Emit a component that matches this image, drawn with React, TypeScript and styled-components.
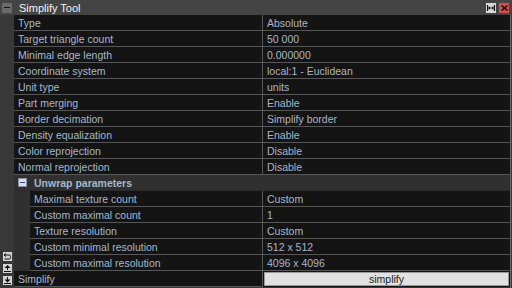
import React from "react";
import styled, { createGlobalStyle } from "styled-components";

const GlobalStyle = createGlobalStyle`
  html, body {
    margin: 0;
    padding: 0;
    background: #383838;
  }
  body {
    font-family: "Liberation Sans", Arial, sans-serif;
    font-size: 10.5px;
  }
`;

const Panel = styled.div`
  width: 512px;
  height: 288px;
  display: flex;
  flex-direction: column;
  background: #383838;
  overflow: hidden;
`;

const TitleBar = styled.div`
  height: 15px;
  display: flex;
  align-items: center;
  background: #444444;
  padding: 0 3px 0 2px;
  box-sizing: border-box;
`;

const CollapseBox = styled.div`
  width: 10px;
  height: 10px;
  background: #6a6a6a;
  display: flex;
  align-items: center;
  justify-content: center;
  margin-right: 7px;
  &::after {
    content: "";
    width: 6px;
    height: 1px;
    background: #111;
  }
`;

const Title = styled.div`
  color: #f2f2f2;
  font-size: 11px;
  flex: 1;
`;

const TitleButton = styled.div<{ $red?: boolean }>`
  width: 10px;
  height: 10px;
  margin-left: 3px;
  background: ${(p) => (p.$red ? "#dc4c4c" : "#d6d6d6")};
  display: flex;
  align-items: center;
  justify-content: center;
`;

const Body = styled.div`
  flex: 1;
  display: flex;
`;

const Gutter = styled.div`
  width: 14px;
  display: flex;
  flex-direction: column;
  justify-content: flex-end;
  align-items: center;
  gap: 3px;
  padding-bottom: 3px;
  box-sizing: border-box;
`;

const GutterIcon = styled.div`
  width: 9px;
  height: 9px;
  background: #d4d4d4;
  display: flex;
`;

const Table = styled.div`
  flex: 1;
  display: flex;
  flex-direction: column;
  border-right: 1px solid #6a6a6a;
  margin-right: 1px;
`;

const Row = styled.div<{ $indent?: boolean }>`
  height: 16px;
  display: flex;
  background: #303030;
  padding-left: ${(p) => (p.$indent ? "16px" : "0")};
`;

const Label = styled.div<{ $indent?: boolean }>`
  width: ${(p) => (p.$indent ? "228px" : "244px")};
  height: 14px;
  line-height: 14px;
  padding: 1px 0 0 4px;
  background: #141414;
  color: #a4b8ce;
  border-bottom: 1px solid #565656;
  white-space: nowrap;
`;

const Value = styled.div`
  flex: 1;
  height: 14px;
  line-height: 14px;
  padding: 1px 0 0 4px;
  background: #141414;
  color: #a9b6c6;
  border-left: 1px solid #565656;
  border-bottom: 1px solid #565656;
  white-space: nowrap;
`;

const GroupRow = styled.div`
  height: 16px;
  display: flex;
  align-items: center;
  background: #303030;
  border-bottom: 1px solid #2a2a2a;
  box-sizing: border-box;
  padding-left: 4px;
`;

const GroupBox = styled.div`
  width: 9px;
  height: 9px;
  background: #dcdce4;
  border: 1px solid #8a8a9a;
  box-sizing: border-box;
  display: flex;
  align-items: center;
  justify-content: center;
  margin-right: 7px;
  &::after {
    content: "";
    width: 5px;
    height: 1px;
    background: #2a4aa0;
  }
`;

const GroupTitle = styled.div`
  font-weight: bold;
  color: #a4b8ce;
  padding-top: 1px;
`;

const ButtonCell = styled.div`
  flex: 1;
  height: 16px;
  background: #141414;
  border-left: 1px solid #565656;
  padding: 1px;
  box-sizing: border-box;
  display: flex;
`;

const ActionButton = styled.button`
  flex: 1;
  margin: 0;
  padding: 1px 0 0;
  background: #e2e2e2;
  border: 1px solid #9a9a9a;
  color: #1a1a1a;
  font-family: "Liberation Sans", Arial, sans-serif;
  font-size: 10.5px;
  line-height: 11px;
`;

const mainRows: [string, string][] = [
  ["Type", "Absolute"],
  ["Target triangle count", "50 000"],
  ["Minimal edge length", "0.000000"],
  ["Coordinate system", "local:1 - Euclidean"],
  ["Unit type", "units"],
  ["Part merging", "Enable"],
  ["Border decimation", "Simplify border"],
  ["Density equalization", "Enable"],
  ["Color reprojection", "Disable"],
  ["Normal reprojection", "Disable"],
];

const unwrapRows: [string, string][] = [
  ["Maximal texture count", "Custom"],
  ["Custom maximal count", "1"],
  ["Texture resolution", "Custom"],
  ["Custom minimal resolution", "512 x 512"],
  ["Custom maximal resolution", "4096 x 4096"],
];

const UndoIcon = () => (
  <svg width="9" height="9" viewBox="0 0 9 9">
    <path d="M3 1.5 L1 3 L3 4.5 M1 3 H6.5 Q7.5 3 7.5 4.5 V5.5 Q7.5 7 6.5 7 H1.5" fill="none" stroke="#111" strokeWidth="1" />
  </svg>
);

const UpIcon = () => (
  <svg width="9" height="9" viewBox="0 0 9 9">
    <path d="M1.5 4 L4.5 1 L7.5 4 Z M4 4 H5 V6 H4 Z M1 7 H8 V8 H1 Z" fill="#111" />
  </svg>
);

const DownIcon = () => (
  <svg width="9" height="9" viewBox="0 0 9 9">
    <path d="M4 1 H5 V3.5 H7.5 L4.5 6.5 L1.5 3.5 H4 Z M1 7 H8 V8 H1 Z" fill="#111" />
  </svg>
);

const App = () => {
  return (
    <Panel>
      <GlobalStyle />
      <TitleBar>
        <CollapseBox />
        <Title>Simplify Tool</Title>
        <TitleButton>
          <svg width="8" height="6" viewBox="0 0 8 6">
            <path d="M0 0 H1 V6 H0 Z M7 0 H8 V6 H7 Z M1.5 1 L4 3 L1.5 5 Z M6.5 1 L4 3 L6.5 5 Z" fill="#111" />
          </svg>
        </TitleButton>
        <TitleButton $red>
          <svg width="7" height="6" viewBox="0 0 7 6">
            <path d="M0.5 0.5 L6.5 5.5 M6.5 0.5 L0.5 5.5" stroke="#111" strokeWidth="1.6" />
          </svg>
        </TitleButton>
      </TitleBar>
      <Body>
        <Gutter>
          <GutterIcon>
            <UndoIcon />
          </GutterIcon>
          <GutterIcon>
            <UpIcon />
          </GutterIcon>
          <GutterIcon>
            <DownIcon />
          </GutterIcon>
        </Gutter>
        <Table>
          {mainRows.map(([label, value]) => (
            <Row key={label}>
              <Label>{label}</Label>
              <Value>{value}</Value>
            </Row>
          ))}
          <GroupRow>
            <GroupBox />
            <GroupTitle>Unwrap parameters</GroupTitle>
          </GroupRow>
          {unwrapRows.map(([label, value]) => (
            <Row key={label} $indent>
              <Label $indent>{label}</Label>
              <Value>{value}</Value>
            </Row>
          ))}
          <Row>
            <Label>Simplify</Label>
            <ButtonCell>
              <ActionButton>simplify</ActionButton>
            </ButtonCell>
          </Row>
        </Table>
      </Body>
    </Panel>
  );
};

export default App;
